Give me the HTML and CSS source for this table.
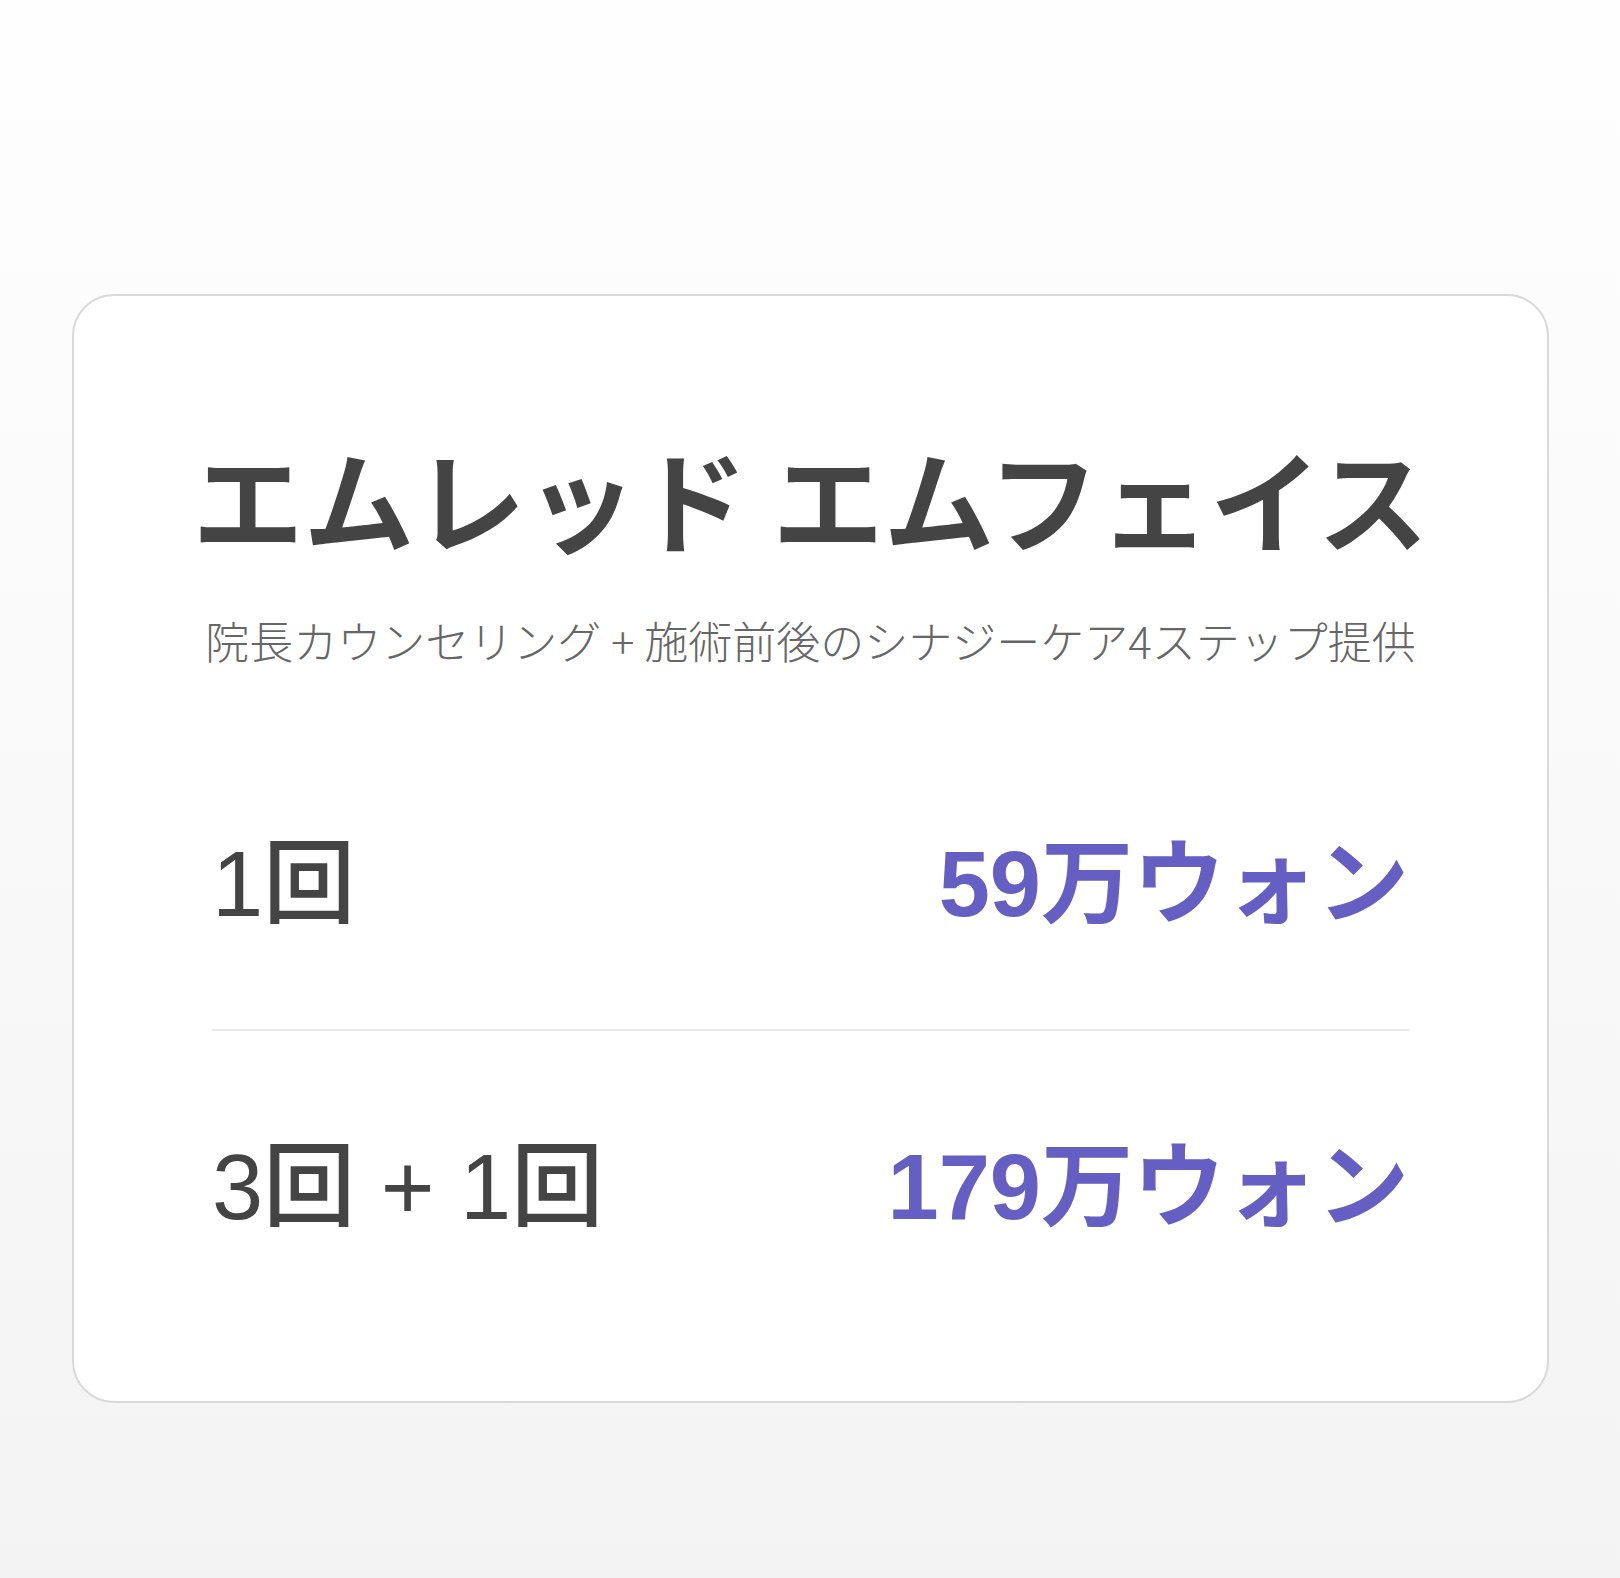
FILE: index.html
```html
<!DOCTYPE html>
<html lang="ja">
<head>
  <meta charset="UTF-8" />
  <title>エムレッド エムフェイス</title>
  <link rel="stylesheet" href="styles.css">
</head>
<body>

  <div class="card">
    <h1 class="title">エムレッド エムフェイス</h1>
    <p class="subtitle">院長カウンセリング + 施術前後のシナジーケア4ステップ提供</p>

    <div class="price-list">
      <div class="price-row">
        <span class="label">1回</span>
        <span class="price">59万ウォン</span>
      </div>
      <div class="price-row">
        <span class="label">3回 + 1回</span>
        <span class="price">179万ウォン</span>
      </div>
    </div>
  </div>

</body>
</html>
```

FILE: styles.css
```css
html, body {
  margin: 0;
  padding: 0;
  min-height: 100%;
}

body {
  background: linear-gradient(to bottom, #fefefe 0%, #f9f9f9 50%, #f3f3f3 100%);
  font-family: "Noto Sans CJK JP", "Noto Sans", sans-serif;
  color: #444444;
  padding: 294px 71px 172px 72px;
  box-sizing: border-box;
  min-height: 100vh;
}

.card {
  background-color: #ffffff;
  border: 2px solid #d9d9d9;
  border-radius: 42px;
  padding: 136px 138px 69px;
}

.title {
  margin: 0 -60px;
  font-size: 111px;
  font-weight: 700;
  line-height: 130px;
  text-align: center;
  white-space: nowrap;
}

.subtitle {
  margin: 48px -60px 0;
  font-size: 44px;
  font-weight: 300;
  line-height: 60px;
  color: #666666;
  text-align: center;
  white-space: nowrap;
}

.price-list {
  margin-top: 58px;
}

.price-row {
  display: flex;
  justify-content: space-between;
  align-items: center;
  padding: 101px 0 90px;
  line-height: 110px;
  font-family: "Liberation Sans", "Noto Sans CJK JP", sans-serif;
}

.price-row + .price-row {
  border-top: 2px solid #e8e8e8;
}

.label {
  font-size: 92px;
  font-weight: 500;
  color: #444444;
}

.price {
  font-size: 92px;
  font-weight: 700;
  color: #655fc4;
}
```
